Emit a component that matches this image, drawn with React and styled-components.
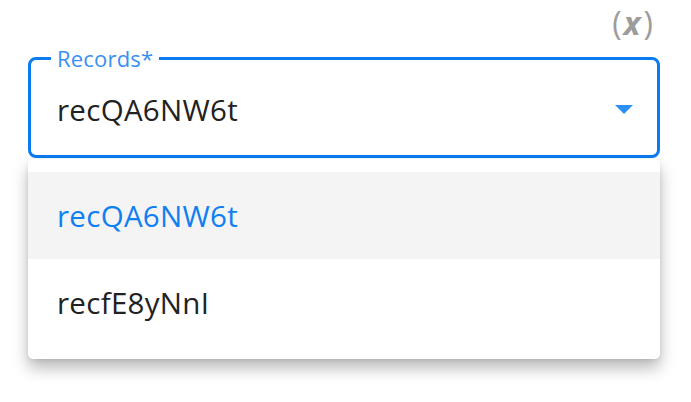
import React from 'react'
import styled, { createGlobalStyle } from 'styled-components'

const GlobalStyle = createGlobalStyle`
  body {
    margin: 0;
    background: #fff;
    font-family: 'Open Sans', 'Noto Sans', sans-serif;
  }
`

const Page = styled.div`
  width: 691px;
  height: 402px;
  padding: 0 31px 0 28px;
  box-sizing: border-box;
  display: flex;
  flex-direction: column;
`

const TopBar = styled.div`
  display: flex;
  justify-content: flex-end;
  height: 49px;
  align-items: center;
  padding-right: 7px;
`

const VarToggle = styled.span`
  color: #9c9c9c;
  font-size: 32px;
  font-weight: 400;
  line-height: 1;
  margin-top: -3px;

  i {
    font-style: italic;
    font-weight: 700;
    padding: 0 3px 0 2px;
  }
`

const Field = styled.fieldset`
  margin: 0;
  padding: 0 24px 0 26px;
  width: 632px;
  box-sizing: border-box;
  border: 3px solid #0b7bf2;
  border-radius: 8px;
`

const Legend = styled.legend`
  color: #3a90f2;
  font-size: 22px;
  padding: 0 6px;
  margin-left: -6px;
  line-height: 18px;
  letter-spacing: 0.2px;
`

const Row = styled.div`
  height: 88px;
  display: flex;
  align-items: center;
  justify-content: space-between;
`

const Value = styled.span`
  font-size: 29.5px;
  color: #222;
  letter-spacing: 0.3px;
  margin-top: -4px;
`

const Arrow = styled.svg`
  width: 18px;
  height: 9px;
  margin-top: -3px;
`

const Menu = styled.ul`
  list-style: none;
  margin: 1px 0 0;
  padding: 13px 0 13px;
  width: 632px;
  background: #fff;
  border-radius: 5px;
  box-shadow: 0 9px 16px rgba(0, 0, 0, 0.28), 0 1px 4px rgba(0, 0, 0, 0.08);
`

const Option = styled.li`
  height: 87px;
  display: flex;
  align-items: center;
  padding-left: 29px;
  font-size: 29.5px;
  letter-spacing: 0.3px;
  color: ${p => (p.selected ? '#0f7ff2' : '#222')};
  background: ${p => (p.selected ? '#f4f4f4' : '#fff')};
`

const records = ['recQA6NW6t', 'recfE8yNnI']

export default function App() {
  const selected = records[0]
  return (
    <Page>
      <GlobalStyle />
      <TopBar>
        <VarToggle>(<i>x</i>)</VarToggle>
      </TopBar>
      <Field>
        <Legend>Records*</Legend>
        <Row>
          <Value>{selected}</Value>
          <Arrow viewBox="0 0 18 9">
            <path d="M0 0 L18 0 L9 9 Z" fill="#2d8ff4" />
          </Arrow>
        </Row>
      </Field>
      <Menu>
        {records.map(r => (
          <Option key={r} selected={r === selected}>
            {r}
          </Option>
        ))}
      </Menu>
    </Page>
  )
}
